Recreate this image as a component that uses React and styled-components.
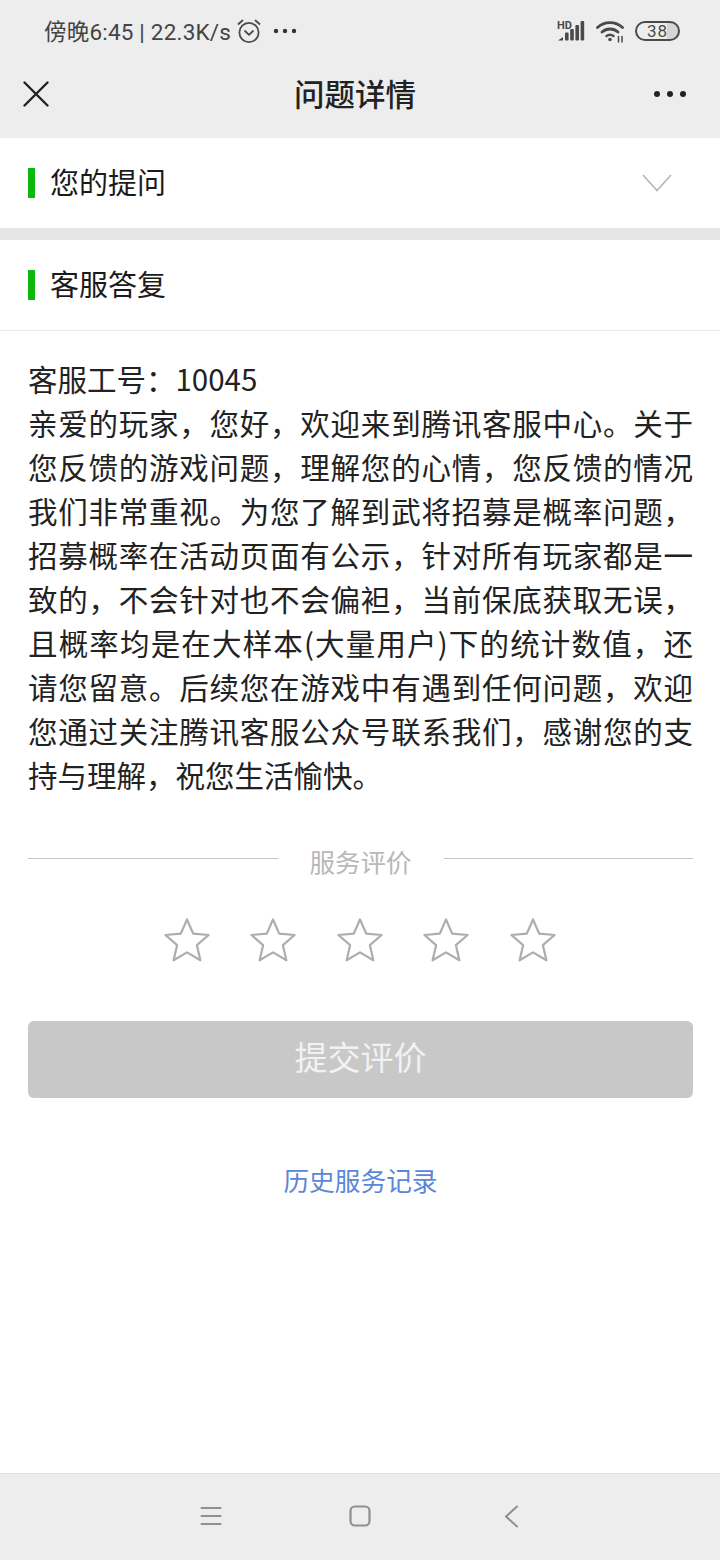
import React from "react";
import styled, { createGlobalStyle } from "styled-components";

const GlobalStyle = createGlobalStyle`
  html, body {
    margin: 0;
    padding: 0;
    background: #fff;
  }
  * {
    box-sizing: border-box;
  }
`;

const FONT = `"Noto Sans CJK SC", "Noto Sans", sans-serif`;

const answer =
  "亲爱的玩家，您好，欢迎来到腾讯客服中心。关于您反馈的游戏问题，理解您的心情，您反馈的情况我们非常重视。为您了解到武将招募是概率问题，招募概率在活动页面有公示，针对所有玩家都是一致的，不会针对也不会偏袒，当前保底获取无误，且概率均是在大样本(大量用户)下的统计数值，还请您留意。后续您在游戏中有遇到任何问题，欢迎您通过关注腾讯客服公众号联系我们，感谢您的支持与理解，祝您生活愉快。";

const Star = () => (
  <svg width="48" height="46" viewBox="0 0 48 46" fill="none">
    <path
      d="M24 2.5 L30.2 16.6 L45.6 18 L33.9 28.2 L37.4 43.3 L24 35.4 L10.6 43.3 L14.1 28.2 L2.4 18 L17.8 16.6 Z"
      stroke="#adadad"
      strokeWidth="2.2"
      strokeLinejoin="round"
    />
  </svg>
);

const App = () => {
  return (
    <Page>
      <GlobalStyle />
      <Top>
        <StatusBar>
          <StatusLeft>
            <StatusText>傍晚6:45 | 22.3K/s</StatusText>
            <svg width="24" height="26" viewBox="0 0 24 26" fill="none" stroke="#4a4a4a" strokeLinecap="round">
              <circle cx="12" cy="14.5" r="9.6" strokeWidth="1.8" />
              <path d="M8 13 L12 16.8 L16 13" strokeWidth="1.8" strokeLinejoin="round" />
              <path d="M1.5 6 L5.5 2.5 M22.5 6 L18.5 2.5" strokeWidth="1.8" />
            </svg>
            <svg width="24" height="6" viewBox="0 0 24 6" fill="#333">
              <circle cx="3" cy="3" r="2.2" />
              <circle cx="12" cy="3" r="2.2" />
              <circle cx="21" cy="3" r="2.2" />
            </svg>
          </StatusLeft>
          <StatusRight>
            <svg width="29" height="22" viewBox="0 0 29 22" fill="#4a4a4a">
              <text x="0" y="9" fontSize="11" fontWeight="700" fontFamily="Roboto, sans-serif">HD</text>
              <path d="M1 20.5 L6 17 L6 20.5 Z" />
              <rect x="8" y="12.5" width="3.6" height="8" rx="1" />
              <rect x="13.2" y="9" width="3.6" height="11.5" rx="1" />
              <rect x="18.4" y="5" width="3.6" height="15.5" rx="1" />
              <rect x="23.6" y="1" width="3.6" height="19.5" rx="1" />
            </svg>
            <svg width="29" height="23" viewBox="0 0 29 23" fill="none" stroke="#4a4a4a" strokeLinecap="round">
              <path d="M1.5 7.5 C8.5 1 19.5 1 26.5 7.5" strokeWidth="2.8" />
              <path d="M6 12 C10.5 8 17.5 8 22 12" strokeWidth="2.8" />
              <path d="M10.5 16 C12.5 14.5 15.5 14.5 17.5 16" strokeWidth="2.4" />
              <circle cx="14" cy="19.5" r="1.8" fill="#4a4a4a" stroke="none" />
              <path d="M22.5 16.5 V22 M26 16.5 V22" strokeWidth="1.5" />
            </svg>
            <Battery>38</Battery>
          </StatusRight>
        </StatusBar>
        <NavBar>
          <svg width="26" height="26" viewBox="0 0 26 26" fill="none" stroke="#222" strokeWidth="2.4" strokeLinecap="round">
            <path d="M1.5 1.5 L24.5 24.5 M24.5 1.5 L1.5 24.5" />
          </svg>
          <NavTitle>问题详情</NavTitle>
          <NavDots width="32" height="6" viewBox="0 0 32 6" fill="#222">
            <circle cx="3" cy="3" r="3" />
            <circle cx="16" cy="3" r="3" />
            <circle cx="29" cy="3" r="3" />
          </NavDots>
        </NavBar>
      </Top>

      <Section $gap>
        <SectionTitle>您的提问</SectionTitle>
        <svg width="30" height="18" viewBox="0 0 30 18" fill="none" stroke="#b5b5b5" strokeWidth="1.6">
          <path d="M1 1 L15 16.5 L29 1" />
        </svg>
      </Section>
      <Section>
        <SectionTitle>客服答复</SectionTitle>
      </Section>

      <Main>
        <Reply>
          <ReplyLine>客服工号：10045</ReplyLine>
          <ReplyLine $justify>{answer}</ReplyLine>
        </Reply>

        <RateTitle>
          <Rule />
          <RateLabel>服务评价</RateLabel>
          <Rule />
        </RateTitle>

        <Stars>
          {[0, 1, 2, 3, 4].map((i) => (
            <Star key={i} />
          ))}
        </Stars>

        <SubmitButton>提交评价</SubmitButton>
        <HistoryLink>历史服务记录</HistoryLink>
      </Main>

      <BottomBar>
        <svg width="22" height="20" viewBox="0 0 22 20" fill="none" stroke="#8f8f8f" strokeWidth="2" strokeLinecap="round">
          <path d="M1.5 2 H20.5 M1.5 10 H20.5 M1.5 18 H20.5" />
        </svg>
        <svg width="22" height="22" viewBox="0 0 22 22" fill="none" stroke="#8f8f8f" strokeWidth="2.2">
          <rect x="1.5" y="1.5" width="19" height="19" rx="4.5" />
        </svg>
        <svg width="15" height="23" viewBox="0 0 15 23" fill="none" stroke="#8f8f8f" strokeWidth="2" strokeLinecap="round" strokeLinejoin="round">
          <path d="M13 1.5 L2 11.5 L13 21.5" />
        </svg>
      </BottomBar>
    </Page>
  );
};
export default App;

const Page = styled.div`
  width: 720px;
  height: 1560px;
  display: flex;
  flex-direction: column;
  background: #fff;
  font-family: ${FONT};
  overflow: hidden;
`;
const Top = styled.div`
  background: #ededed;
  height: 138px;
`;
const StatusBar = styled.div`
  height: 62px;
  display: flex;
  justify-content: space-between;
  align-items: center;
  padding: 0 40px 0 44px;
`;
const StatusLeft = styled.div`
  display: flex;
  align-items: center;
  gap: 6px;
  & > svg:last-child {
    margin-left: 6px;
  }
`;
const StatusText = styled.span`
  font-family: Roboto, "Noto Sans CJK SC", sans-serif;
  font-size: 22.5px;
  font-weight: 400;
  letter-spacing: 0.2px;
  margin-top: -2px;
  color: #444;
  white-space: nowrap;
`;
const StatusRight = styled.div`
  display: flex;
  align-items: center;
  gap: 10px;
`;
const Battery = styled.div`
  width: 45px;
  height: 20px;
  border: 2px solid #4a4a4a;
  border-radius: 10px;
  font-size: 17px;
  line-height: 16px;
  letter-spacing: 1px;
  font-family: Roboto, sans-serif;
  text-align: center;
  color: #4a4a4a;
  background: linear-gradient(to right, #ededed 72%, #d5d5d5 72%);
`;
const NavBar = styled.div`
  height: 76px;
  padding: 0 34px 12px 23px;
  display: grid;
  grid-template-columns: 60px 1fr 59px;
  align-items: center;
`;
const NavTitle = styled.div`
  font-size: 30.5px;
  line-height: 40px;
  margin-top: -2px;
  font-weight: 500;
  color: #222;
  text-align: center;
`;
const NavDots = styled.svg`
  justify-self: end;
`;
const Section = styled.div`
  height: ${(p) => (p.$gap ? "102px" : "91px")};
  padding: 0 48px 0 28px;
  display: flex;
  justify-content: space-between;
  align-items: center;
  background: #fff;
  border-bottom: ${(p) => (p.$gap ? "12px solid #e6e6e6" : "1px solid #e8e8e8")};
`;
const SectionTitle = styled.div`
  border-left: 7px solid #0cb80c;
  padding-left: 15px;
  height: 30px;
  font-size: 29px;
  line-height: 26px;
  color: #1a1a1a;
`;
const Main = styled.div`
  flex: 1;
  padding: 25px 27px 0 28px;
  display: flex;
  flex-direction: column;
`;
const Reply = styled.div`
  font-size: 29.5px;
  line-height: 44px;
  color: #222;
`;
const ReplyLine = styled.div`
  text-align: ${(p) => (p.$justify ? "justify" : "left")};
`;
const RateTitle = styled.div`
  margin-top: 41px;
  display: flex;
  align-items: center;
  gap: 31px;
  height: 44px;
`;
const Rule = styled.div`
  flex: 1;
  height: 1px;
  margin-top: -2px;
  background: #c4c4c4;
`;
const RateLabel = styled.div`
  font-size: 25.5px;
  margin-top: 2px;
  padding: 0 1px;
  color: #b8b8b8;
`;
const Stars = styled.div`
  margin-top: 36px;
  padding-right: 2px;
  display: flex;
  justify-content: center;
  gap: 38.5px;
`;
const SubmitButton = styled.div`
  margin-top: 58px;
  height: 77px;
  padding-bottom: 8px;
  border-radius: 6px;
  background: #c8c8c8;
  color: #f2f2f2;
  font-size: 33px;
  display: flex;
  align-items: center;
  justify-content: center;
`;
const HistoryLink = styled.div`
  margin-top: 63px;
  text-align: center;
  font-size: 25.7px;
  line-height: 38px;
  color: #5a87d8;
`;
const BottomBar = styled.div`
  height: 87px;
  background: #ededed;
  border-top: 1px solid #e2e2e2;
  display: grid;
  grid-template-columns: 149px 155px auto;
  align-items: center;
  padding: 0 0 2px 200px;
`;
